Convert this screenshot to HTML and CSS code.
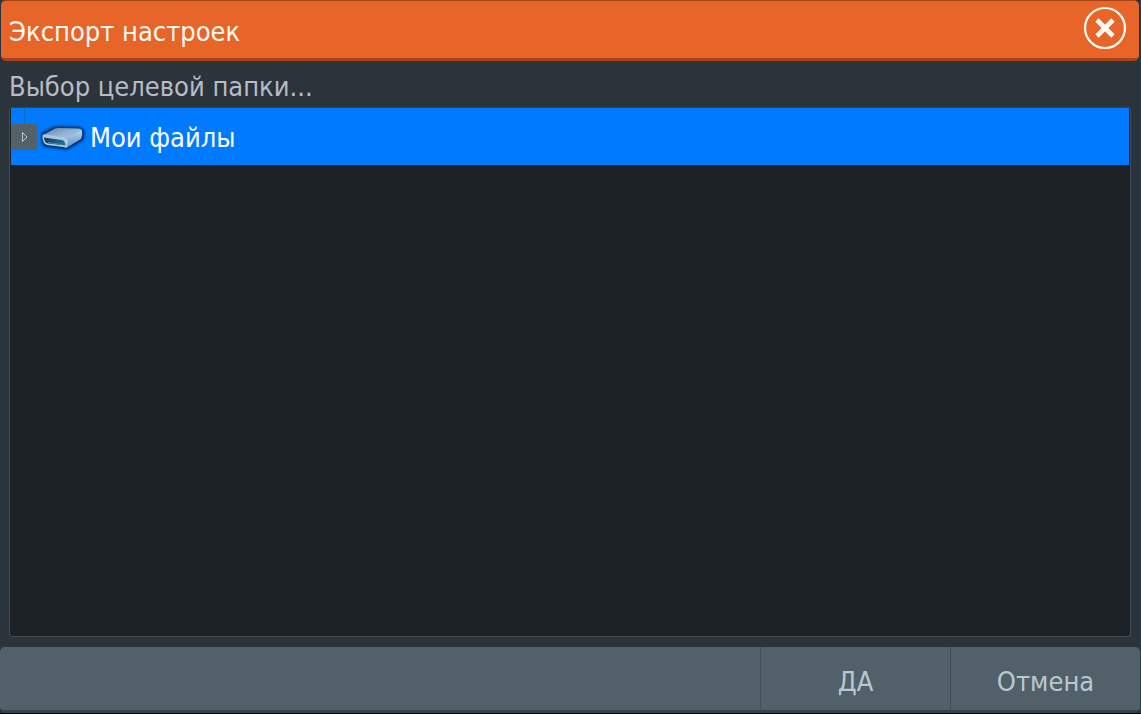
FILE: index.html
```html
<!DOCTYPE html>
<html lang="ru">
<head>
<meta charset="utf-8">
<meta name="viewport" content="width=device-width, initial-scale=1">
<title>Экспорт настроек</title>
<link rel="stylesheet" href="styles.css">
</head>
<body>
<main class="dialog">
  <header class="titlebar">
    <h1 class="title">Экспорт настроек</h1>
    <button class="close" type="button" aria-label="Закрыть">
      <svg viewBox="0 0 44 44" width="44" height="44" fill="none" stroke="#fffaf2" aria-hidden="true">
        <circle cx="22" cy="22" r="20" stroke-width="2.2"/>
        <path d="M14 14 30 30M30 14 14 30" stroke-width="4.600"/>
      </svg>
    </button>
  </header>
  <section class="content">
    <h2 class="prompt" id="prompt">Выбор целевой папки...</h2>
    <ul class="tree" role="tree" aria-labelledby="prompt">
      <li class="row" role="treeitem" aria-selected="true" aria-expanded="false">
        <span class="branch">
          <button class="expander" type="button" aria-label="Развернуть">
            <svg viewBox="0 0 26 26" width="26" height="26" fill="none" stroke="#c3cbce" aria-hidden="true">
              <path d="M11.500 8.500v9l4.500-4.500z"/>
            </svg>
          </button>
        </span>
        <svg class="drive" viewBox="0 0 46 34" width="46" height="34" aria-hidden="true">
          <defs>
            <linearGradient id="top" x1="0" y1="0" x2="1" y2="1">
              <stop offset="0" stop-color="#5f7f9f"/>
              <stop offset=".5" stop-color="#92b3d2"/>
              <stop offset="1" stop-color="#a9cae8"/>
            </linearGradient>
            <linearGradient id="side" x1="0" y1="0" x2="0" y2="1">
              <stop offset="0" stop-color="#b4d4f0"/>
              <stop offset="1" stop-color="#5f8fc6"/>
            </linearGradient>
            <linearGradient id="slot" x1="0" y1="0" x2="1" y2="0">
              <stop offset="0" stop-color="#14395c"/>
              <stop offset="1" stop-color="#2f6f95"/>
            </linearGradient>
            <filter id="glow" x="-20%" y="-30%" width="140%" height="160%">
              <feGaussianBlur stdDeviation="1.500"/>
            </filter>
          </defs>
          <path d="M3 14 15 8 40 8.500 43 12 42 19 27 28 5 25 3 22z" fill="#002050" stroke="#002050" stroke-width="3" stroke-linejoin="round" filter="url(#glow)"/>
          <path d="M3 15 15 8.500Q16 8 18 8L39 8.500Q42 9 42 11L28 19.500 5 17z" fill="url(#top)"/>
          <path d="M24 18.500 42 10.500Q43 15 41 19L27 27.500Q25 28 24 27z" fill="url(#side)"/>
          <path d="M2.500 15.500Q3 14 5 14.500L24 17.500Q28 18 28 21L27 27.500 7 25Q2 23.500 2.500 15.500z" fill="#a9cae7"/>
          <path d="M4 17.500 22 20Q25 20.500 25.500 25.500L8 23.500Q4 22.500 4 17.500z" fill="url(#slot)"/>
          <path d="M8 22.500 22 24.500" stroke="#4a8bb0" stroke-width="1" fill="none"/>
        </svg>
        <span class="label">Мои файлы</span>
      </li>
    </ul>
  </section>
  <footer class="actions">
    <button class="action" type="button">ДА</button>
    <button class="action" type="button">Отмена</button>
  </footer>
</main>
</body>
</html>
```
FILE: styles.css
```css
* {
  box-sizing: border-box;
}

body {
  margin: 0;
  background: #000;
  color: #fff;
  font: 27px/36px "DejaVu Sans Condensed", "DejaVu Sans", sans-serif;
}

button {
  margin: 0;
  padding: 0;
  border: 0;
  background: none;
  color: inherit;
  font: inherit;
  cursor: pointer;
}

svg {
  display: block;
}

.dialog {
  display: flex;
  flex-direction: column;
  min-height: 100vh;
  background: #2b333b;
  border: solid #1c4054;
  border-width: 0 1px 1px 0;
  border-bottom-color: #000;
}

.titlebar {
  display: flex;
  align-items: center;
  justify-content: space-between;
  height: 61px;
  padding: 0 12px 0 8px;
  margin: 0 1px;
  border: solid #a84318;
  border-width: 1px 0 3px;
  border-radius: 5px;
  background: #e8652a;
}

.title,
.prompt {
  margin: 0;
  font-size: inherit;
  font-weight: 400;
}

.title {
  padding-top: 4px;
  color: #fffaf2;
}

.close {
  width: 44px;
  height: 44px;
  margin-bottom: 4px;
}

.content {
  flex: 1;
  display: flex;
  flex-direction: column;
  padding: 8px 9px 10px;
}

.prompt {
  margin-bottom: 2px;
  color: #b7bcc5;
}

.tree {
  flex: 1;
  margin: 0;
  padding: 0 1px;
  list-style: none;
  background: #1c2225;
  border: 1px solid #434c54;
  border-top-color: #1e4878;
  border-radius: 3px;
}

.row {
  display: flex;
  align-items: center;
  height: 57px;
  background: #007bff;
}

.branch {
  align-self: stretch;
  padding-top: 16px;
  background: linear-gradient(#1768bd, #1768bd) 13px 0 / 1px 16px no-repeat;
}

.expander {
  display: block;
  width: 26px;
  height: 26px;
  border-radius: 2px;
  background: #536269;
}

.drive {
  margin: 0 4px 0 3px;
}

.label {
  padding-top: 2px;
}

.actions {
  display: flex;
  justify-content: flex-end;
  height: 66px;
  background: #52606a;
  border-bottom: 3px solid #35434e;
  border-radius: 5px;
}

.action {
  width: 190px;
  padding-top: 6px;
  border-left: 1px solid #414f59;
  color: #b9c7d2;
}
```
